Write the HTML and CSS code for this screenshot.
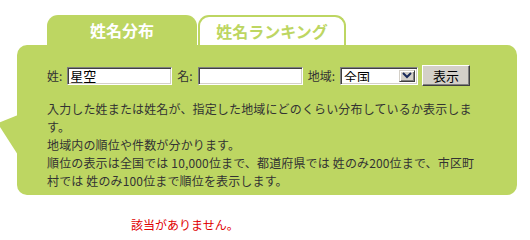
FILE: index.html
```html
<!DOCTYPE html>
<html lang="ja">
<head>
<meta charset="utf-8">
<title>姓名分布</title>
<link rel="stylesheet" href="styles.css">
</head>
<body>
<div class="page">
  <div class="tabs">
    <div class="tab tab-active">姓名分布</div>
    <div class="tab tab-idle">姓名ランキング</div>
  </div>
  <div class="panel">
    <form class="search">
      <label class="lbl">姓:</label>
      <input class="field" type="text" value="星空">
      <label class="lbl lbl-gap">名:</label>
      <input class="field" type="text" value="">
      <label class="lbl lbl-gap">地域:</label>
      <span class="select-box">
        <select class="select"><option>全国</option></select>
        <span class="drop"><svg width="10" height="7" viewBox="0 0 10 7"><path d="M1 1 L5 5 L9 1" fill="none" stroke="#1a2a5a" stroke-width="2"/></svg></span>
      </span>
      <button class="btn" type="button">表示</button>
    </form>
    <p class="desc">入力した姓または姓名が、指定した地域にどのくらい分布しているか表示しま<br>す。<br>地域内の順位や件数が分かります。<br>順位の表示は全国では 10,000位まで、都道府県では 姓のみ200位まで、市区町<br>村では 姓のみ100位まで順位を表示します。</p>
  </div>
  <p class="notfound">該当がありません。</p>
</div>
</body>
</html>
```

FILE: styles.css
```css
html, body {
  margin: 0;
  padding: 0;
  background: #ffffff;
}
body {
  font-family: "Noto Sans CJK JP", "Noto Sans", sans-serif;
  font-size: 12px;
  color: #333333;
}
.page {
  width: 530px;
}
.tabs {
  display: flex;
  padding: 15px 0 0 47px;
  gap: 1px;
}
.tab {
  box-sizing: border-box;
  height: 30px;
  border-radius: 11px 11px 0 0;
  font-size: 16px;
  font-weight: bold;
  line-height: 30px;
  text-align: center;
}
.tab-active {
  width: 150px;
  background: #bdd662;
  color: #ffffff;
}
.tab-idle {
  width: 148px;
  background: #ffffff;
  color: #bdd662;
  border: 2px solid #bdd662;
  border-bottom: none;
  line-height: 28px;
}
.panel {
  position: relative;
  margin-left: 17px;
  width: 500px;
  height: 150px;
  box-sizing: border-box;
  background: #bdd662;
  border-radius: 10px;
  padding: 20px 0 0 30px;
}
.panel::before {
  content: "";
  position: absolute;
  left: -17px;
  top: 70px;
  width: 18px;
  height: 40px;
  background: #bdd662;
  clip-path: polygon(100% 0, 0 18%, 0 30%, 100% 100%);
}
.search {
  display: flex;
  align-items: center;
  height: 21px;
  margin: 0;
}
.lbl {
  color: #333333;
  font-size: 12px;
  margin-right: 5px;
}
.lbl-gap {
  margin-left: 5px;
}
.field {
  width: 105px;
  height: 18px;
  box-sizing: border-box;
  margin: 0;
  padding: 0 2px;
  border: 1px solid;
  border-color: #808080 #ffffff #ffffff #808080;
  box-shadow: inset 1px 1px #404040, inset -1px -1px #d4d0c8;
  background: #ffffff;
  font-family: "Noto Sans CJK JP", sans-serif;
  font-size: 13px;
  color: #000000;
  outline: none;
}
.select-box {
  display: flex;
  align-items: stretch;
  width: 78px;
  height: 18px;
  box-sizing: border-box;
  border: 1px solid;
  border-color: #808080 #ffffff #ffffff #808080;
  box-shadow: inset 1px 1px #404040, inset -1px -1px #d4d0c8;
  background: #ffffff;
  padding: 2px;
  margin-right: 4px;
}
.select {
  appearance: none;
  -webkit-appearance: none;
  flex: 1;
  min-width: 0;
  border: none;
  background: #ffffff;
  padding: 0 0 0 1px;
  margin: 0;
  font-family: "Noto Sans CJK JP", sans-serif;
  font-size: 13px;
  line-height: 14px;
  color: #000000;
  outline: none;
}
.drop {
  width: 16px;
  box-sizing: border-box;
  background: #d4d0c8;
  border: 1px solid;
  border-color: #d4d0c8 #404040 #404040 #d4d0c8;
  box-shadow: inset 1px 1px #ffffff, inset -1px -1px #808080;
  display: flex;
  align-items: center;
  justify-content: center;
}
.btn {
  width: 48px;
  height: 21px;
  box-sizing: border-box;
  margin: 0;
  padding: 0;
  background: #d4d0c8;
  border: 1px solid;
  border-color: #ffffff #404040 #404040 #ffffff;
  box-shadow: inset -1px -1px #808080;
  font-family: "Noto Sans CJK JP", sans-serif;
  font-size: 13px;
  color: #000000;
  line-height: 17px;
}
.desc {
  margin: 14px 0 0 0;
  line-height: 18px;
  font-size: 12px;
  white-space: nowrap;
  color: #333333;
  letter-spacing: 0.15px;
}
.notfound {
  margin: 21px 0 0 131px;
  color: #e00000;
  font-size: 12px;
  line-height: 18px;
}
```
